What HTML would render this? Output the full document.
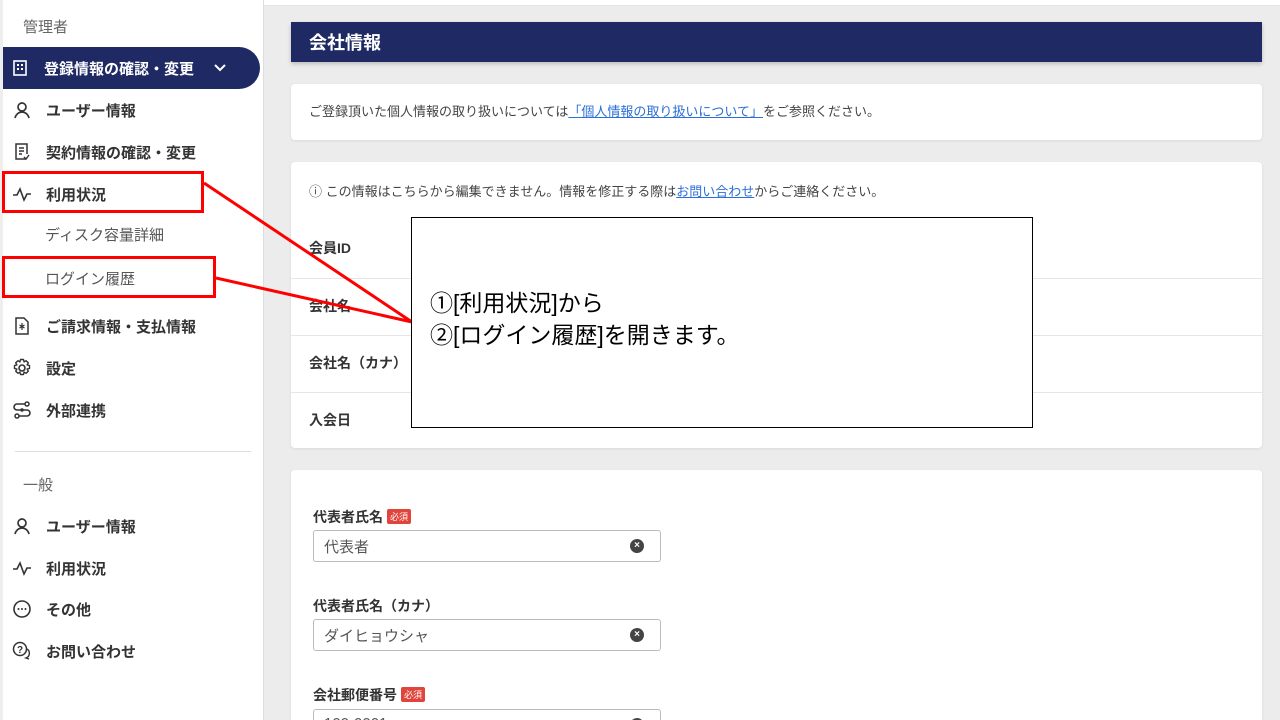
<!DOCTYPE html>
<html><head><meta charset="utf-8"><style>
*{margin:0;padding:0;box-sizing:border-box}
html{width:1280px;height:720px;overflow:hidden}
body{width:1280px;height:720px;overflow:hidden;background:#ececec;font-family:"Liberation Sans","Noto Sans CJK JP",sans-serif;color:#333;position:relative}
.side{position:absolute;left:0;top:0;width:264px;height:720px;background:#fff;border-right:1px solid #ddd;border-left:3px solid #eee}
.topstrip{position:absolute;left:264px;top:0;width:1016px;height:6px;background:#fff;border-bottom:1px solid #e4e4e4}
.sec{position:absolute;left:24px;font-size:15px;color:#666}
.item{position:absolute;left:9px;font-size:15px;font-weight:bold;color:#333;display:flex;align-items:center;height:20px}
.item svg{width:20px;height:20px;margin-right:14px;flex:none}
.sub{position:absolute;left:46px;font-size:15px;color:#555}
.active{position:absolute;left:0;top:47px;width:257px;height:42px;background:#1f2a65;border-radius:0 21px 21px 0;color:#fff;font-weight:bold;font-size:15px;display:flex;align-items:center;padding-left:7px}
.card{position:absolute;left:291px;width:971px;background:#fff;border-radius:4px;box-shadow:0 1px 3px rgba(0,0,0,.08);overflow:hidden}
.hdr{position:absolute;left:291px;top:22px;width:971px;height:40px;background:#1f2a65;color:#fff;font-weight:bold;font-size:18px;padding:7px 0 0 18px;box-shadow:0 2px 4px rgba(0,0,0,.2)}
.t13{font-size:13px;color:#444}
a{color:#2b6fd6;text-decoration:underline}
.lbl{position:absolute;left:18px;font-size:14px;font-weight:bold;color:#333}
.div{position:absolute;left:0;width:971px;height:1px;background:#e6e6e6}
.inp{position:absolute;left:22px;width:348px;height:32px;border:1px solid #bbb;border-radius:3px;font-size:15px;color:#555;padding:5px 10px}
.x{position:absolute;right:16px;top:8px;width:14px;height:14px;border-radius:50%;background:#444;color:#fff;font-size:10px;line-height:14px;text-align:center;font-weight:bold}
.req{display:inline-block;background:#e0443a;color:#fff;font-size:9px;padding:1px 3px;border-radius:2px;vertical-align:2px;margin-left:4px;font-weight:normal}
.red{position:absolute;border:3px solid #f00}
</style></head><body>
<div class="topstrip"></div>
<div class="side">
<div class="sec" style="top:16px;left:20px">管理者</div>
<div class="active"><svg width="20" height="20" viewBox="0 0 20 20" style="margin-right:14px"><rect x="4" y="3" width="12" height="14" fill="none" stroke="#fff" stroke-width="1.6"/><g fill="#fff"><rect x="7" y="6" width="2" height="2"/><rect x="11" y="6" width="2" height="2"/><rect x="7" y="10" width="2" height="2"/><rect x="11" y="10" width="2" height="2"/></g></svg>登録情報の確認・変更<svg width="16" height="16" viewBox="0 0 16 16" style="margin-left:18px"><path d="M3 5l5 5 5-5" fill="none" stroke="#fff" stroke-width="2"/></svg></div>
<div class="item" style="top:100px"><svg viewBox="0 0 20 20"><circle cx="10" cy="7" r="4" fill="none" stroke="#333" stroke-width="1.7"/><path d="M3 18c1-4 4-6 7-6s6 2 7 6" fill="none" stroke="#333" stroke-width="1.7"/></svg>ユーザー情報</div>
<div class="item" style="top:142px"><svg viewBox="0 0 20 20"><path d="M14 17H4V2h11v10" fill="none" stroke="#333" stroke-width="1.5"/><path d="M7 6h5M7 9h5M7 12h3M12 15l2 2 3-4" fill="none" stroke="#333" stroke-width="1.4"/></svg>契約情報の確認・変更</div>
<div class="item" style="top:184px"><svg viewBox="0 0 20 20"><path d="M1 11h4l3-6 4 11 3-6h4" fill="none" stroke="#333" stroke-width="1.6"/></svg>利用状況</div>
<div class="sub" style="top:224px;left:42px">ディスク容量詳細</div>
<div class="sub" style="top:268px;left:42px">ログイン履歴</div>
<div class="item" style="top:316px"><svg viewBox="0 0 20 20"><path d="M4 2h8l4 4v12H4z" fill="none" stroke="#333" stroke-width="1.5"/><path d="M10 7v7M7.5 9l5 3M12.5 9l-5 3" stroke="#333" stroke-width="1.2"/></svg>ご請求情報・支払情報</div>
<div class="item" style="top:358px"><svg viewBox="0 0 20 20"><circle cx="10" cy="10" r="3" fill="none" stroke="#333" stroke-width="1.6"/><path d="M8.5 1.5h3l.6 2.4 2-1.2 2.2 2.2-1.2 2 2.4.6v3l-2.4.6 1.2 2-2.2 2.2-2-1.2-.6 2.4h-3l-.6-2.4-2 1.2-2.2-2.2 1.2-2-2.4-.6v-3l2.4-.6-1.2-2 2.2-2.2 2 1.2z" fill="none" stroke="#333" stroke-width="1.4" stroke-linejoin="round"/></svg>設定</div>
<div class="item" style="top:400px"><svg viewBox="0 0 20 20"><path d="M15 4H5a3 3 0 000 6h10a3 3 0 010 6H5" fill="none" stroke="#333" stroke-width="1.6"/><circle cx="15" cy="4" r="2" fill="#fff" stroke="#333" stroke-width="1.5"/><circle cx="5" cy="16" r="2" fill="#fff" stroke="#333" stroke-width="1.5"/><circle cx="10" cy="10" r="1.7" fill="#333"/></svg>外部連携</div>
<div style="position:absolute;left:12px;top:451px;width:236px;height:1px;background:#ddd"></div>
<div class="sec" style="top:474px;left:20px">一般</div>
<div class="item" style="top:516px"><svg viewBox="0 0 20 20"><circle cx="10" cy="7" r="4" fill="none" stroke="#333" stroke-width="1.7"/><path d="M3 18c1-4 4-6 7-6s6 2 7 6" fill="none" stroke="#333" stroke-width="1.7"/></svg>ユーザー情報</div>
<div class="item" style="top:558px"><svg viewBox="0 0 20 20"><path d="M1 11h4l3-6 4 11 3-6h4" fill="none" stroke="#333" stroke-width="1.6"/></svg>利用状況</div>
<div class="item" style="top:599px"><svg viewBox="0 0 20 20"><circle cx="10" cy="10" r="8" fill="none" stroke="#333" stroke-width="1.6"/><circle cx="6.5" cy="10" r="1" fill="#333"/><circle cx="10" cy="10" r="1" fill="#333"/><circle cx="13.5" cy="10" r="1" fill="#333"/></svg>その他</div>
<div class="item" style="top:641px"><svg viewBox="0 0 20 20"><circle cx="8" cy="8" r="6.5" fill="none" stroke="#333" stroke-width="1.5"/><text x="5" y="12" font-size="10" font-family="Liberation Sans" fill="#333">?</text><path d="M15 8a5 5 0 01-1 9l3 1" fill="none" stroke="#333" stroke-width="1.4"/></svg>お問い合わせ</div>
</div>
<div class="red" style="left:2px;top:171px;width:202px;height:42px"></div>
<div class="red" style="left:2px;top:256px;width:214px;height:42px"></div>

<div class="hdr">会社情報</div>
<div class="card" style="top:84px;height:56px"><div class="t13" style="position:absolute;left:18px;top:17px">ご登録頂いた個人情報の取り扱いについては<a>「個人情報の取り扱いについて」</a>をご参照ください。</div></div>
<div class="card" style="top:162px;height:286px">
<div class="t13" style="position:absolute;left:18px;top:19px">ⓘ この情報はこちらから編集できません。情報を修正する際は<a>お問い合わせ</a>からご連絡ください。</div>
<div class="lbl" style="top:76px">会員ID</div>
<div class="div" style="top:116px"></div>
<div class="lbl" style="top:134px">会社名</div>
<div class="div" style="top:173px"></div>
<div class="lbl" style="top:191px">会社名（カナ）</div>
<div class="div" style="top:230px"></div>
<div class="lbl" style="top:248px">入会日</div>
</div>
<div class="card" style="top:470px;height:250px;border-radius:4px 4px 0 0">
<div class="lbl" style="left:22px;top:37px">代表者氏名<span class="req">必須</span></div>
<div class="inp" style="top:60px">代表者<span class="x">×</span></div>
<div class="lbl" style="left:22px;top:126px">代表者氏名（カナ）</div>
<div class="inp" style="top:149px">ダイヒョウシャ<span class="x">×</span></div>
<div class="lbl" style="left:22px;top:215px">会社郵便番号<span class="req">必須</span></div>
<div class="inp" style="top:239px">100-0001<span class="x">×</span></div>
</div>

<svg style="position:absolute;left:0;top:0" width="1280" height="720"><path d="M204 183L412 322M216 278L412 322" stroke="#f00" stroke-width="3"/></svg>
<div style="position:absolute;left:411px;top:217px;width:622px;height:211px;background:#fff;border:1px solid #000;font-size:23px;color:#000;padding:69px 0 0 18px;line-height:32px">①[利用状況]から<br>②[ログイン履歴]を開きます。</div>
</body></html>
